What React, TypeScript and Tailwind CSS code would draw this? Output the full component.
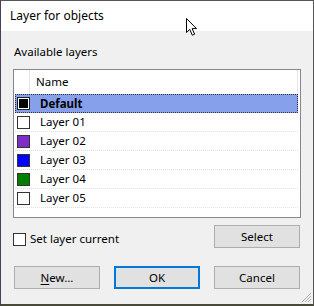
import React from "react";

const layers = [
  { name: "Default", color: "#000000", selected: true },
  { name: "Layer 01", color: "#ffffff" },
  { name: "Layer 02", color: "#7f2fc8" },
  { name: "Layer 03", color: "#0000ff" },
  { name: "Layer 04", color: "#008000" },
  { name: "Layer 05", color: "#ffffff" },
];

export default function App() {
  return (
    <div
      className="relative w-[314px] h-[306px] flex flex-col border-t border-r border-[#555555] border-l border-l-[#4a3f5c] border-b-2 border-b-[#4a4a3a] text-[11.5px] text-black"
      style={{ fontFamily: '"Noto Sans", "Open Sans", sans-serif' }}
    >
      <div className="h-[30px] bg-white flex items-center pl-[9px] shrink-0">
        <span className="leading-[16px] text-[12px]">Layer for objects</span>
      </div>
      <div className="flex-1 bg-[#f0f0f0] flex flex-col pl-[12px] pr-[12px] pt-[13px]">
        <div className="leading-[16px] pl-[1px]">Available layers</div>
        <div className="mt-[9px] h-[149px] border border-[#828790] bg-white flex flex-col">
          <div className="h-[24px] flex items-stretch shrink-0">
            <div className="w-[16px] border-r border-[#e5e5e5]" />
            <div className="flex-1 flex items-center pl-[6px] border-r border-[#e5e5e5] mr-[2px]">
              Name
            </div>
          </div>
          {layers.map((l) => (
            <div
              key={l.name}
              className={
                l.selected
                  ? "h-[19px] flex items-center ml-[1px] mr-[2px] bg-[#87a0eb] border border-dotted border-[#333333]"
                  : "h-[19px] flex items-center ml-[1px] mr-[2px] border-b border-dotted border-[#e0e0e0]"
              }
            >
              <div
                className={
                  l.selected
                    ? "w-[13px] h-[13px] ml-[1px] border border-[#222222] outline outline-1 outline-white -outline-offset-2"
                    : "w-[13px] h-[13px] ml-[2px] border border-[#333333]"
                }
                style={{ backgroundColor: l.color }}
              />
              <span
                className={
                  l.selected
                    ? "ml-[10px] font-bold leading-[16px]"
                    : "ml-[10px] leading-[16px]"
                }
              >
                {l.name}
              </span>
            </div>
          ))}
        </div>
        <div className="mt-[7px] flex justify-between items-start">
          <label className="flex items-center mt-[6px] gap-[4px]">
            <span className="w-[13px] h-[13px] border border-[#333333] bg-white" />
            <span className="leading-[16px]">Set layer current</span>
          </label>
          <button className="w-[86px] h-[23px] mr-[1px] bg-[#e1e1e1] border border-[#adadad] leading-[16px]">
            Select
          </button>
        </div>
        <div className="mt-[18px] flex gap-[14px] pl-[1px]">
          <button className="w-[86px] h-[23px] bg-[#e1e1e1] border border-[#adadad] leading-[16px]">
            <span className="underline underline-offset-2">N</span>ew...
          </button>
          <button className="w-[86px] h-[23px] bg-[#e1e1e1] border-2 border-[#0078d7] leading-[16px]">
            OK
          </button>
          <button className="w-[86px] h-[23px] bg-[#e1e1e1] border border-[#adadad] leading-[16px]">
            Cancel
          </button>
        </div>
      </div>
      <svg
        className="absolute right-[1px] bottom-[1px]"
        width="12"
        height="12"
        viewBox="0 0 12 12"
      >
        <line x1="11" y1="2" x2="2" y2="11" stroke="#b0b0b0" strokeWidth="1" />
        <line x1="11" y1="5" x2="5" y2="11" stroke="#b0b0b0" strokeWidth="1" />
        <line x1="11" y1="8" x2="8" y2="11" stroke="#b0b0b0" strokeWidth="1" />
      </svg>
      <svg
        className="absolute left-[184px] top-[16px]"
        width="14"
        height="20"
        viewBox="0 0 14 20"
      >
        <path
          d="M1.5 1.5 L1.5 15.5 L4.8 12.4 L7.3 18.2 L9.6 17.2 L7.1 11.6 L11.5 11.6 Z"
          fill="white"
          stroke="black"
          strokeWidth="1"
          strokeLinejoin="miter"
        />
      </svg>
    </div>
  );
}
